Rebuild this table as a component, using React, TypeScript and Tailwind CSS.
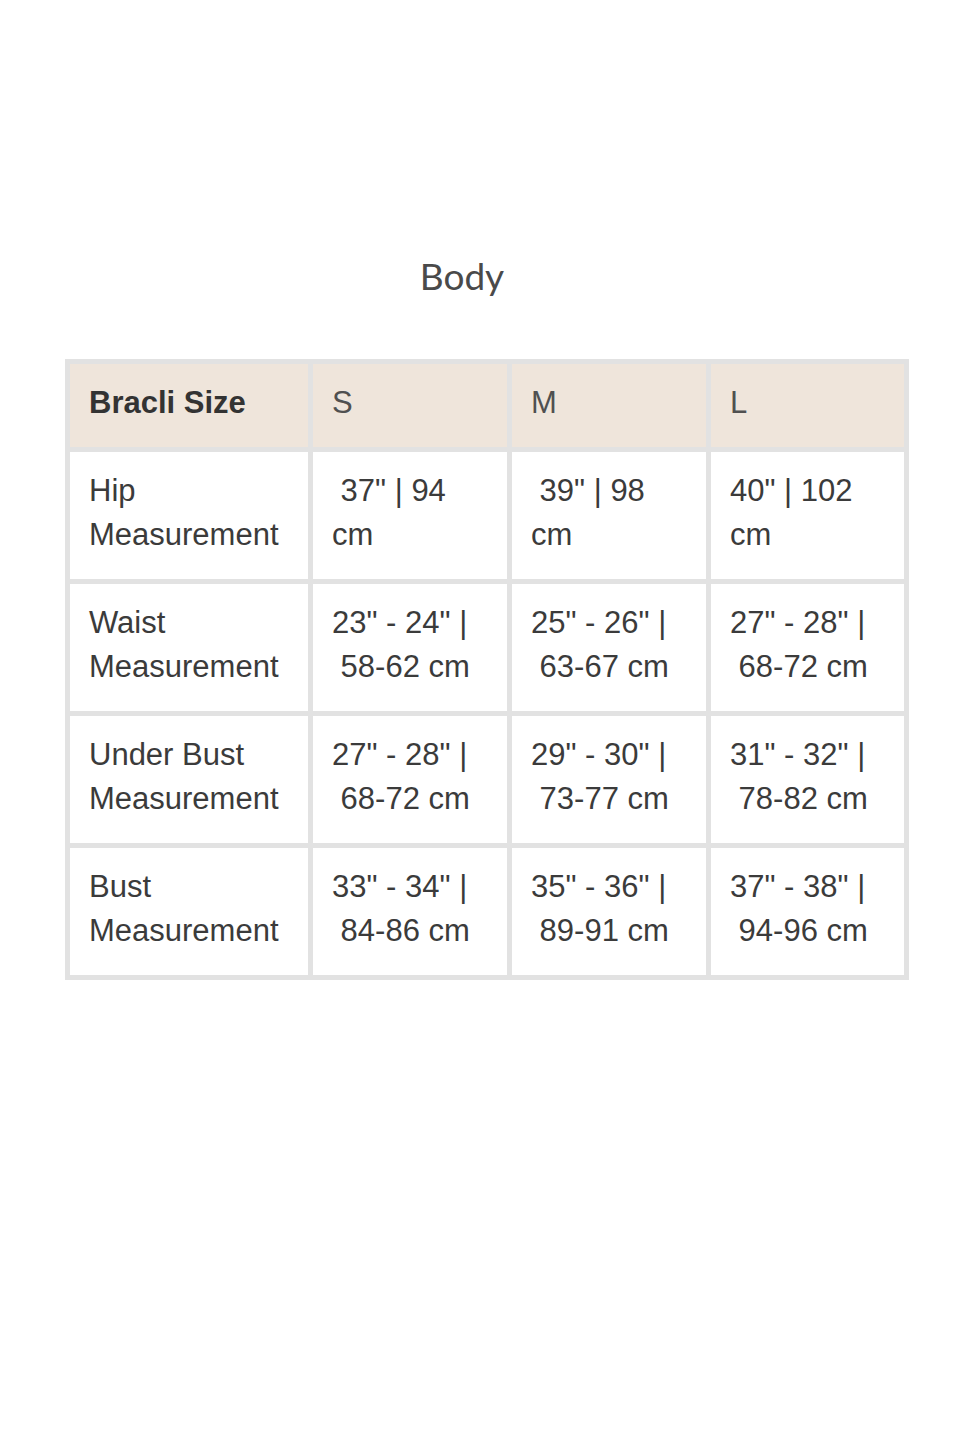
import React from "react";

const sp = "\u00A0";

type Row = { label: string[]; cells: string[][] };

const rows: Row[] = [
  {
    label: ["Hip", "Measurement"],
    cells: [
      [sp + '37" | 94', "cm"],
      [sp + '39" | 98', "cm"],
      ['40" | 102', "cm"],
    ],
  },
  {
    label: ["Waist", "Measurement"],
    cells: [
      ['23" - 24" |', sp + "58-62 cm"],
      ['25" - 26" |', sp + "63-67 cm"],
      ['27" - 28" |', sp + "68-72 cm"],
    ],
  },
  {
    label: ["Under Bust", "Measurement"],
    cells: [
      ['27" - 28" |', sp + "68-72 cm"],
      ['29" - 30" |', sp + "73-77 cm"],
      ['31" - 32" |', sp + "78-82 cm"],
    ],
  },
  {
    label: ["Bust", "Measurement"],
    cells: [
      ['33" - 34" |', sp + "84-86 cm"],
      ['35" - 36" |', sp + "89-91 cm"],
      ['37" - 38" |', sp + "94-96 cm"],
    ],
  },
];

function Lines({ lines }: { lines: string[] }) {
  return (
    <div className="whitespace-nowrap">
      {lines.map((l, i) => (
        <div key={i}>{l}</div>
      ))}
    </div>
  );
}

export default function App() {
  return (
    <div className="min-h-screen w-full bg-white pt-[254px]">
      <div className="mx-auto w-[844px] translate-x-[2px]">
        <h1
          className="pr-[50px] text-center text-[37px] leading-[44px] font-normal text-[#4a4a4a]"
          style={{ fontFamily: "Lato, 'Noto Sans', sans-serif" }}
        >
          Body
        </h1>
        <div
          className="mt-[61px] grid grid-cols-[238px_194px_194px_193px] grid-rows-[83px_127px_127px_127px_127px] gap-[5px] bg-[#e2e2e2] p-[5px] text-[31px] leading-[44px] text-[#3b3b3b]"
          style={{ fontFamily: "'Liberation Sans', Arial, sans-serif" }}
        >
          <div className="flex items-center bg-[#efe5db] pb-[6px] pl-[19px] font-bold text-[#333333]">
            Bracli Size
          </div>
          {["S", "M", "L"].map((s) => (
            <div
              key={s}
              className="flex items-center bg-[#efe5db] pb-[6px] pl-[19px] text-[#505050]"
            >
              {s}
            </div>
          ))}
          {rows.map((r, ri) => (
            <React.Fragment key={ri}>
              <div className="flex items-center bg-white pb-[6px] pl-[19px]">
                <Lines lines={r.label} />
              </div>
              {r.cells.map((c, ci) => (
                <div
                  key={ci}
                  className="flex items-center bg-white pb-[6px] pl-[19px]"
                >
                  <Lines lines={c} />
                </div>
              ))}
            </React.Fragment>
          ))}
        </div>
      </div>
    </div>
  );
}
